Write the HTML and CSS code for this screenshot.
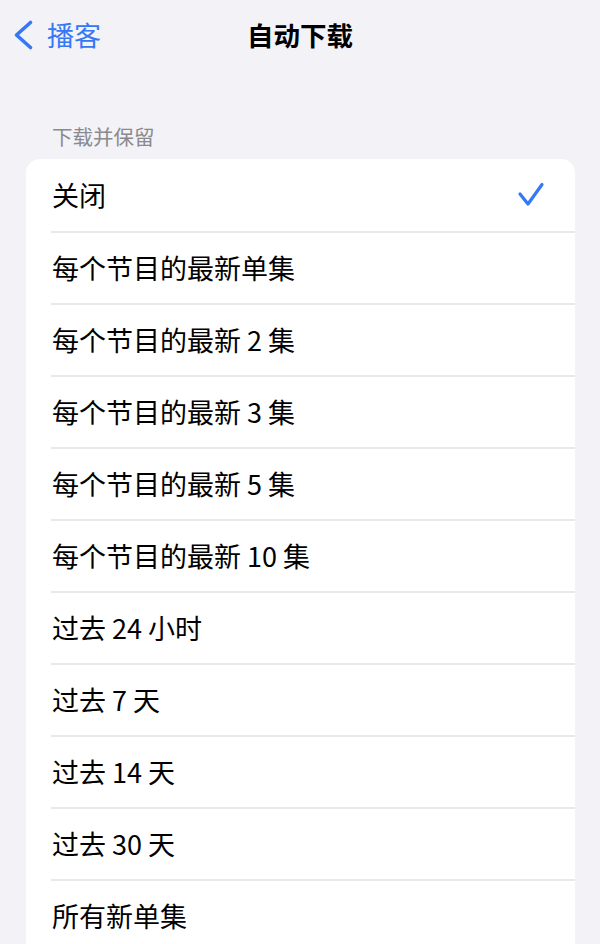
FILE: index.html
```html
<!DOCTYPE html>
<html lang="zh-CN">
<head>
<meta charset="utf-8">
<title>自动下载</title>
<link rel="stylesheet" href="styles.css">
</head>
<body>
<header class="nav">
  <a class="back" href="#">
    <svg class="chev" width="22" height="32" viewBox="0 0 22 32" aria-hidden="true">
      <path d="M18.5 3.5 L4.5 16 L18.5 28.5" fill="none" stroke="#3478f6" stroke-width="3.6" stroke-linecap="round" stroke-linejoin="round"/>
    </svg>
    <span class="back-label">播客</span>
  </a>
  <h1 class="title">自动下载</h1>
  <div class="spacer"></div>
</header>
<main class="content">
  <div class="section-header">下载并保留</div>
  <ul class="list">
    <li class="row"><span>关闭</span>
      <svg class="check" width="28" height="28" viewBox="0 0 28 28" aria-hidden="true">
        <path d="M3 13 L11 23 L25 3.5" fill="none" stroke="#3478f6" stroke-width="3.2" stroke-linecap="round" stroke-linejoin="round"/>
      </svg>
    </li>
    <li class="row"><span>每个节目的最新单集</span></li>
    <li class="row"><span>每个节目的最新 2 集</span></li>
    <li class="row"><span>每个节目的最新 3 集</span></li>
    <li class="row"><span>每个节目的最新 5 集</span></li>
    <li class="row"><span>每个节目的最新 10 集</span></li>
    <li class="row"><span>过去 24 小时</span></li>
    <li class="row"><span>过去 7 天</span></li>
    <li class="row"><span>过去 14 天</span></li>
    <li class="row"><span>过去 30 天</span></li>
    <li class="row"><span>所有新单集</span></li>
  </ul>
</main>
</body>
</html>
```
FILE: styles.css
```css
html, body {
  margin: 0;
  padding: 0;
}
body {
  background: #f2f2f7;
  font-family: "Noto Sans CJK SC", "Noto Sans", sans-serif;
  color: #000;
  overflow: hidden;
  height: 944px;
}
.nav {
  display: grid;
  grid-template-columns: 1fr auto 1fr;
  align-items: center;
  height: 70px;
}
.back {
  display: flex;
  align-items: center;
  padding-left: 12px;
  gap: 13px;
  color: #3478f6;
  text-decoration: none;
  font-size: 27px;
  line-height: 32px;
}
.chev {
  display: block;
  flex: none;
}
.title {
  margin: 0;
  font-size: 26.5px;
  line-height: 32px;
  font-weight: 700;
  color: #000;
}
.content {
  padding: 54px 25px 0 26px;
}
.section-header {
  padding-left: 26px;
  font-size: 20.5px;
  line-height: 24px;
  color: #8a8a8e;
  margin-bottom: 11px;
}
.list {
  list-style: none;
  margin: 0;
  padding: 0 0 0 25px;
  background: #fff;
  border-radius: 14px 14px 0 0;
}
.row {
  display: flex;
  align-items: center;
  justify-content: space-between;
  height: 70px;
  padding-left: 1px;
  padding-right: 30px;
  font-size: 27px;
  line-height: 36px;
}
.row:first-child {
  height: 72px;
}
.row + .row {
  border-top: 2px solid #e8e8ed;
}
.check {
  display: block;
  flex: none;
}
```
